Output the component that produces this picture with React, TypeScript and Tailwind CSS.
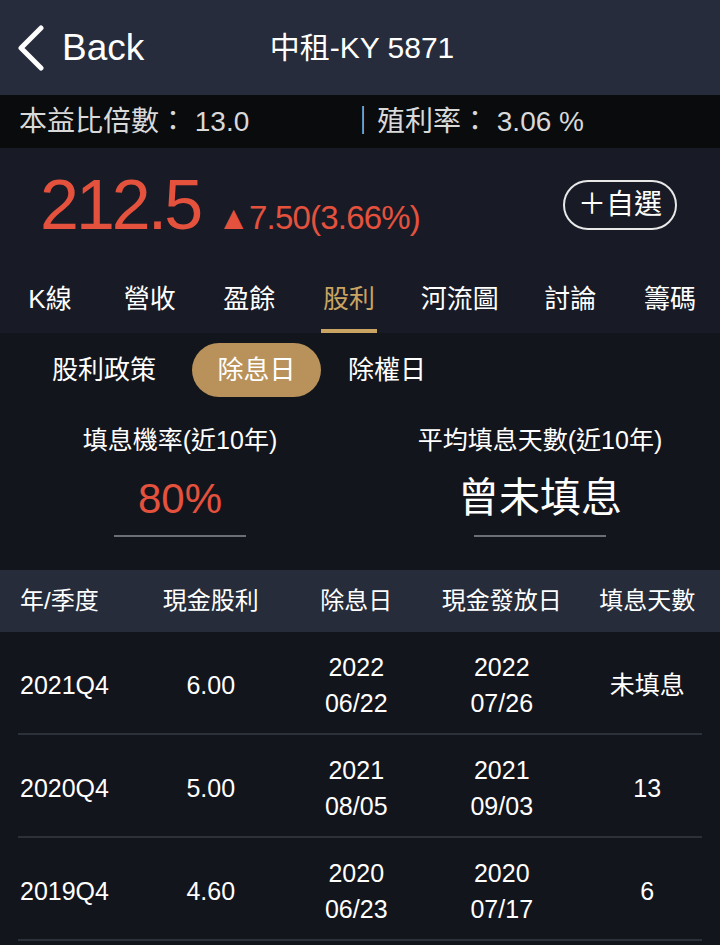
import React from "react";

const tabs = ["K線", "營收", "盈餘", "股利", "河流圖", "討論", "籌碼"];

const rows = [
    { q: "2021Q4", cash: "6.00", exY: "2022", exD: "06/22", payY: "2022", payD: "07/26", days: "未填息" },
    { q: "2020Q4", cash: "5.00", exY: "2021", exD: "08/05", payY: "2021", payD: "09/03", days: "13" },
    { q: "2019Q4", cash: "4.60", exY: "2020", exD: "06/23", payY: "2020", payD: "07/17", days: "6" },
];

const font = { fontFamily: '"Liberation Sans", "Noto Sans CJK TC", sans-serif' };

const App = () => {
    return (
        <div className="w-[720px] h-[945px] overflow-hidden bg-[#13151c] text-white" style={font}>
            {/* nav bar */}
            <div className="h-[95px] bg-[#262c3b] grid grid-cols-[1fr_auto_1fr] items-center">
                <div className="flex items-center pl-[16px] gap-[16px]">
                    <svg width="30" height="46" viewBox="0 0 30 46" fill="none">
                        <polyline
                            points="25,3 5,23 25,43"
                            stroke="white"
                            strokeWidth="5"
                            strokeLinecap="round"
                            strokeLinejoin="round"
                        />
                    </svg>
                    <span className="text-[37px] leading-none">Back</span>
                </div>
                <div className="text-[30px] leading-none pl-[4px]">中租-KY 5871</div>
                <div />
            </div>

            {/* ratio bar */}
            <div className="h-[53px] bg-[#0a0b0d] flex items-center pl-[19px] text-[28px] text-[#d9d9d9]">
                <span className="w-[330px]">本益比倍數：&nbsp;13.0</span>
                <span>｜殖利率：&nbsp;3.06 %</span>
            </div>

            {/* price + tabs */}
            <div className="h-[185px] bg-[#181b25] flex flex-col">
                <div className="flex items-center justify-between pl-[40px] pr-[43px] pt-[22px]">
                    <div className="flex items-baseline gap-[17px] text-[#e4523e]">
                        <span className="text-[70px] leading-none tracking-[-3px]">212.5</span>
                        <span className="text-[33px] leading-none tracking-[-0.8px]">▲7.50(3.66%)</span>
                    </div>
                    <div className="w-[114px] h-[50px] rounded-full border-2 border-[#e8e8e8] flex items-center justify-center text-[28px]">
                        ＋自選
                    </div>
                </div>
                <div className="mt-auto flex justify-between pl-[22px] pr-[22px]">
                    {tabs.map((t) => (
                        <div key={t} className="flex flex-col items-center">
                            <span
                                className={
                                    "text-[26px] leading-none pb-[17px] " +
                                    (t === "股利" ? "text-[#c9a463]" : "text-white")
                                }
                            >
                                {t}
                            </span>
                            <div className={"h-[4px] w-[56px] " + (t === "股利" ? "bg-[#c9a463]" : "bg-transparent")} />
                        </div>
                    ))}
                </div>
            </div>

            {/* sub tabs + stats */}
            <div className="h-[237px] bg-[#13151c] flex flex-col">
                <div className="flex items-center pt-[10px] pl-[52px] text-[26px]">
                    <span>股利政策</span>
                    <span className="ml-[36px] w-[129px] h-[54px] rounded-full bg-[#b8925a] flex items-center justify-center">
                        除息日
                    </span>
                    <span className="ml-[27px]">除權日</span>
                </div>
                <div className="grid grid-cols-2 pt-[31px]">
                    <div className="flex flex-col items-center">
                        <span className="text-[25px] leading-none">填息機率(近10年)</span>
                        <span className="text-[42px] leading-none text-[#e4523e] mt-[25px]">80%</span>
                        <div className="w-[132px] h-[2px] bg-[#6d6f75] mt-[15px]" />
                    </div>
                    <div className="flex flex-col items-center">
                        <span className="text-[25px] leading-none">平均填息天數(近10年)</span>
                        <span className="text-[41px] leading-none mt-[25px]">曾未填息</span>
                        <div className="w-[132px] h-[2px] bg-[#6d6f75] mt-[16px]" />
                    </div>
                </div>
            </div>

            {/* table */}
            <div className="h-[62px] bg-[#262c3a] grid grid-cols-[138px_repeat(4,1fr)] items-center text-[24px]">
                <span className="pl-[20px]">年/季度</span>
                <span className="text-center">現金股利</span>
                <span className="text-center">除息日</span>
                <span className="text-center">現金發放日</span>
                <span className="text-center">填息天數</span>
            </div>
            {rows.map((r) => (
                <div key={r.q}>
                    <div className="h-[101px] grid grid-cols-[138px_repeat(4,1fr)] items-center text-[25px] leading-[36px] pt-[4px]">
                        <span className="pl-[20px]">{r.q}</span>
                        <span className="text-center">{r.cash}</span>
                        <span className="text-center flex flex-col">
                            <span>{r.exY}</span>
                            <span>{r.exD}</span>
                        </span>
                        <span className="text-center flex flex-col">
                            <span>{r.payY}</span>
                            <span>{r.payD}</span>
                        </span>
                        <span className="text-center">{r.days}</span>
                    </div>
                    <div className="mx-[18px] h-[2px] bg-[#2c3039]" />
                </div>
            ))}
        </div>
    );
};

export default App;
